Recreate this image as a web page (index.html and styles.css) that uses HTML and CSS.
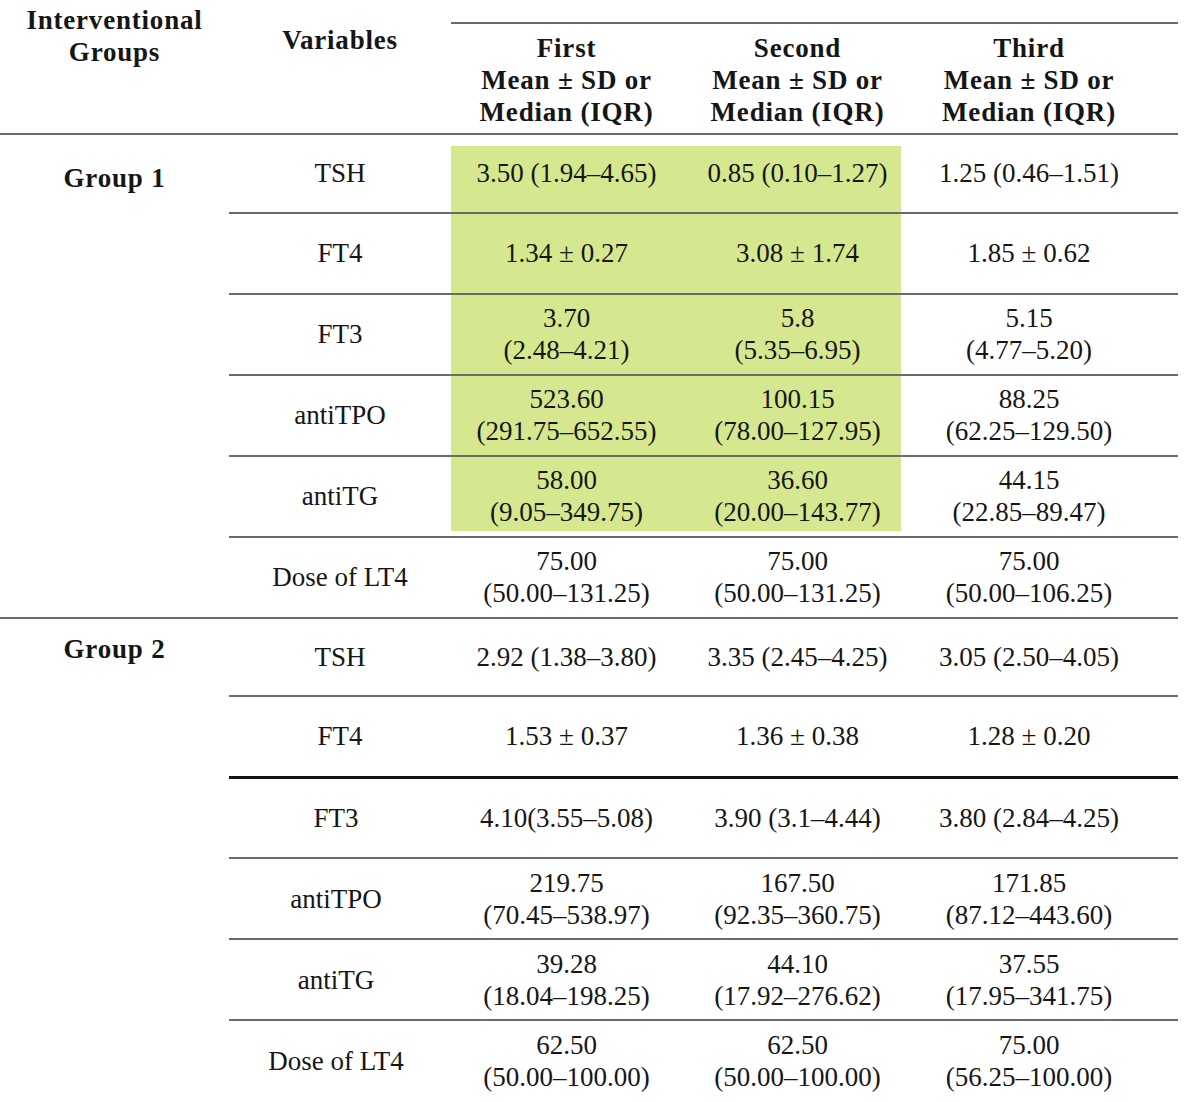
FILE: index.html
```html
<!DOCTYPE html>
<html lang="en">
<head>
<meta charset="utf-8">
<title>Thyroid parameters by interventional group</title>
<link rel="stylesheet" href="styles.css">
</head>
<body>
<table class="tbl">
  <colgroup>
    <col class="c1"><col class="c2"><col class="c3"><col class="c4"><col class="c5">
  </colgroup>
  <thead>
    <tr class="hr1">
      <th rowspan="2" class="h-group">Interventional<br>Groups</th>
      <th rowspan="2" class="h-var">Variables</th>
      <th class="h-gap"></th><th class="h-gap"></th><th class="h-gap last"></th>
    </tr>
    <tr class="hr2">
      <th>First<br>Mean ± SD or<br>Median (IQR)</th>
      <th>Second<br>Mean ± SD or<br>Median (IQR)</th>
      <th class="last">Third<br>Mean ± SD or<br>Median (IQR)</th>
    </tr>
  </thead>
  <tbody class="group">
    <tr>
      <td rowspan="6" class="grp grp-1">Group 1</td>
      <td>TSH</td>
      <td class="hl hl-a hl-top">3.50 (1.94–4.65)</td>
      <td class="hl hl-b hl-top">0.85 (0.10–1.27)</td>
      <td class="last">1.25 (0.46–1.51)</td>
    </tr>
    <tr>
      <td>FT4</td>
      <td class="hl hl-a">1.34 ± 0.27</td>
      <td class="hl hl-b">3.08 ± 1.74</td>
      <td class="last">1.85 ± 0.62</td>
    </tr>
    <tr>
      <td>FT3</td>
      <td class="hl hl-a">3.70<br>(2.48–4.21)</td>
      <td class="hl hl-b">5.8<br>(5.35–6.95)</td>
      <td class="last">5.15<br>(4.77–5.20)</td>
    </tr>
    <tr>
      <td>antiTPO</td>
      <td class="hl hl-a">523.60<br>(291.75–652.55)</td>
      <td class="hl hl-b">100.15<br>(78.00–127.95)</td>
      <td class="last">88.25<br>(62.25–129.50)</td>
    </tr>
    <tr>
      <td>antiTG</td>
      <td class="hl hl-a hl-bottom">58.00<br>(9.05–349.75)</td>
      <td class="hl hl-b hl-bottom">36.60<br>(20.00–143.77)</td>
      <td class="last">44.15<br>(22.85–89.47)</td>
    </tr>
    <tr class="end">
      <td>Dose of LT4</td>
      <td>75.00<br>(50.00–131.25)</td>
      <td>75.00<br>(50.00–131.25)</td>
      <td class="last">75.00<br>(50.00–106.25)</td>
    </tr>
  </tbody>
  <tbody class="group">
    <tr>
      <td rowspan="6" class="grp grp-2">Group 2</td>
      <td>TSH</td>
      <td>2.92 (1.38–3.80)</td>
      <td>3.35 (2.45–4.25)</td>
      <td class="last">3.05 (2.50–4.05)</td>
    </tr>
    <tr class="strong">
      <td>FT4</td>
      <td>1.53 ± 0.37</td>
      <td>1.36 ± 0.38</td>
      <td class="last">1.28 ± 0.20</td>
    </tr>
    <tr>
      <td class="v2">FT3</td>
      <td>4.10(3.55–5.08)</td>
      <td>3.90 (3.1–4.44)</td>
      <td class="last">3.80 (2.84–4.25)</td>
    </tr>
    <tr>
      <td class="v2">antiTPO</td>
      <td>219.75<br>(70.45–538.97)</td>
      <td>167.50<br>(92.35–360.75)</td>
      <td class="last">171.85<br>(87.12–443.60)</td>
    </tr>
    <tr>
      <td class="v2">antiTG</td>
      <td>39.28<br>(18.04–198.25)</td>
      <td>44.10<br>(17.92–276.62)</td>
      <td class="last">37.55<br>(17.95–341.75)</td>
    </tr>
    <tr class="final">
      <td class="v2">Dose of LT4</td>
      <td>62.50<br>(50.00–100.00)</td>
      <td>62.50<br>(50.00–100.00)</td>
      <td class="last">75.00<br>(56.25–100.00)</td>
    </tr>
  </tbody>
</table>
</body>
</html>
```
FILE: styles.css
```css
html, body {
  margin: 0;
  padding: 0;
  background: #ffffff;
}

body {
  color: #161616;
  font-family: "Liberation Serif", "Times New Roman", serif;
}

.tbl {
  border-collapse: collapse;
  table-layout: fixed;
  width: 1178px;
  font-size: 27px;
  line-height: 32px;
}

.c1 { width: 229px; }
.c2 { width: 222px; }
.c3 { width: 231px; }
.c4 { width: 231px; }
.c5 { width: 265px; }

.tbl th,
.tbl td {
  padding: 0;
  text-align: center;
  vertical-align: middle;
  font-weight: normal;
}

.tbl th,
.tbl .grp {
  font-weight: bold;
  letter-spacing: 0.8px;
}

.tbl .last {
  padding-right: 33px;
}

/* header */
.hr1 { height: 23px; }
.hr2 { height: 111px; }

.tbl .h-gap {
  border-bottom: 2px solid #6b6b6b;
}

.tbl .h-group {
  vertical-align: top;
  padding-top: 4px;
  border-bottom: 2px solid #6b6b6b;
}

.tbl .h-var {
  vertical-align: top;
  padding-top: 24px;
  border-bottom: 2px solid #6b6b6b;
}

.tbl .hr2 th {
  border-bottom: 2px solid #6b6b6b;
  padding-top: 2px;
}

/* body rows */
.group tr {
  height: 81px;
}

.group tr:first-child {
  height: 78.5px;
}

.group td {
  border-bottom: 2px solid #6b6b6b;
}

.tbl .grp {
  vertical-align: top;
}

.tbl .grp-1 {
  padding-top: 27px;
  border-bottom: 2px solid #6b6b6b;
}

.tbl .grp-2 {
  padding-top: 14px;
  border-bottom: none;
}

.group .strong td {
  border-bottom: 3px solid #141414;
}

.group .final td {
  border-bottom: none;
}

.tbl .v2 {
  padding-right: 8px;
}

/* highlighted block */
.hl {
  background-image: linear-gradient(#d5e88f, #d5e88f);
  background-repeat: no-repeat;
  background-position: left top;
  background-size: 100% 100%;
}

.hl-b {
  background-size: 219px 100%;
}

.hl-a.hl-top { background-size: 100% calc(100% - 11px); background-position: left bottom; }
.hl-b.hl-top { background-size: 219px calc(100% - 11px); background-position: left bottom; }
.hl-a.hl-bottom { background-size: 100% calc(100% - 5px); }
.hl-b.hl-bottom { background-size: 219px calc(100% - 5px); }
```
